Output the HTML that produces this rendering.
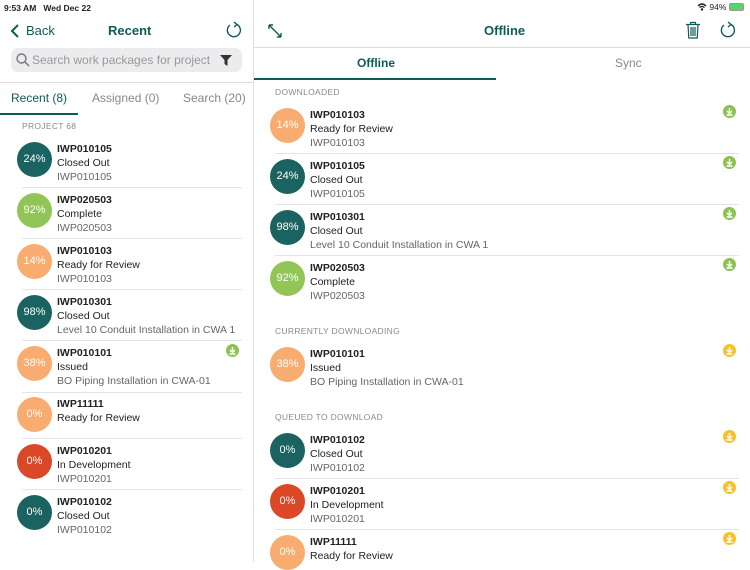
<!DOCTYPE html>
<html><head><meta charset="utf-8"><style>
*{margin:0;padding:0;box-sizing:border-box}
body{width:750px;height:562px;overflow:hidden;background:#fff;font-family:"Liberation Sans",sans-serif;position:relative;color:#222}
.a{position:absolute}
.c{position:absolute;width:35px;height:35px;border-radius:50%;color:#fff;font-size:11px;text-align:center;line-height:35px;opacity:.95}
.t{position:absolute;font-size:10.5px;line-height:14px;white-space:nowrap;margin-top:1px}
.t b{font-weight:bold;color:#222}
.t .g{color:#666}
.hr{position:absolute;height:1px;background:#e4e4e4}
.sec{position:absolute;font-size:8.5px;color:#8a8a8a;letter-spacing:.3px}
.dl{position:absolute;width:13px;height:13px;border-radius:50%}
.dl svg{position:absolute;left:0;top:0}
.teal{background:#0e5b58}.gr{background:#8cc34f}.or{background:#f8a868}.rd{background:#d93f1c}
</style></head><body>
<div class="a" style="left:4px;top:3px;font-size:8.5px;font-weight:bold;color:#222">9:53 AM&nbsp;&nbsp;&nbsp;Wed Dec 22</div>
<div class="a" style="left:697px;top:2px;font-size:8.5px;color:#222">
<svg width="10" height="8" viewBox="0 0 10 8" style="vertical-align:-1px"><path d="M1 3 Q5 -1 9 3 M2.5 4.5 Q5 2.3 7.5 4.5" stroke="#222" stroke-width="1.3" fill="none"/><circle cx="5" cy="6.5" r="1.2" fill="#222"/></svg> 94%
<span style="display:inline-block;width:15px;height:8px;background:#53d76a;border:1px solid #999;border-radius:2px;vertical-align:-1px"></span></div>

<div class="a" style="left:253px;top:0;width:1px;height:562px;background:#e0e0e0"></div>
<svg class="a" style="left:10px;top:24px" width="10" height="14"><path d="M8 1 L2 7 L8 13" stroke="#0e5b58" stroke-width="2" fill="none"/></svg>
<div class="a" style="left:26px;top:23px;font-size:13px;color:#0e5b58">Back</div>
<div class="a" style="left:108px;top:23px;font-size:13px;font-weight:bold;color:#0e5b58">Recent</div>
<svg class="a" style="left:225px;top:21px" width="18" height="18" viewBox="0 0 18 18"><path d="M12 3.5 A6.5 6.5 0 1 1 5 4" stroke="#0e5b58" stroke-width="1.4" fill="none"/><path d="M9 1 L12 3.5 L9 6" stroke="#0e5b58" stroke-width="1.4" fill="none"/></svg>
<div class="a" style="left:11px;top:48px;width:231px;height:24px;background:#ececee;border-radius:7px"></div>
<svg class="a" style="left:16px;top:53px" width="14" height="14"><circle cx="5.5" cy="5.5" r="4.5" stroke="#777" stroke-width="1.4" fill="none"/><path d="M9 9 L13 13" stroke="#777" stroke-width="1.5"/></svg>
<div class="a" style="left:32px;top:53px;font-size:12px;color:#999">Search work packages for project</div>
<svg class="a" style="left:220px;top:55px" width="12" height="11"><path d="M0 0 H12 L7.5 5 V11 L4.5 9 V5 Z" fill="#333"/></svg>
<div class="a" style="left:0;top:82px;width:253px;height:1px;background:#ddd"></div>
<div class="a" style="left:11px;top:91px;font-size:12px;color:#0e5b58">Recent (8)</div>
<div class="a" style="left:92px;top:91px;font-size:12px;color:#888">Assigned (0)</div>
<div class="a" style="left:183px;top:91px;font-size:12px;color:#888">Search (20)</div>
<div class="a" style="left:0;top:113px;width:78px;height:2px;background:#0e5b58"></div>
<div class="sec" style="left:22px;top:121px">PROJECT 68</div>

<div class="c teal" style="left:17px;top:142px">24%</div><div class="t" style="left:57px;top:141px"><b>IWP010105</b><br>Closed Out<br><span class="g">IWP010105</span></div><div class="hr" style="left:22px;top:187px;width:220px"></div>
<div class="c gr" style="left:17px;top:193px">92%</div><div class="t" style="left:57px;top:192px"><b>IWP020503</b><br>Complete<br><span class="g">IWP020503</span></div><div class="hr" style="left:22px;top:238px;width:220px"></div>
<div class="c or" style="left:17px;top:244px">14%</div><div class="t" style="left:57px;top:243px"><b>IWP010103</b><br>Ready for Review<br><span class="g">IWP010103</span></div><div class="hr" style="left:22px;top:289px;width:220px"></div>
<div class="c teal" style="left:17px;top:295px">98%</div><div class="t" style="left:57px;top:294px"><b>IWP010301</b><br>Closed Out<br><span class="g">Level 10 Conduit Installation in CWA 1</span></div><div class="hr" style="left:22px;top:340px;width:220px"></div>
<div class="c or" style="left:17px;top:346px">38%</div><div class="t" style="left:57px;top:345px"><b>IWP010101</b><br>Issued<br><span class="g">BO Piping Installation in CWA-01</span></div><div class="hr" style="left:22px;top:392px;width:220px"></div>
<div class="dl gr" style="left:226px;top:344px"><svg width="13" height="13"><path d="M6.5 3 V8 M4 6 L6.5 8.5 L9 6 M3.5 10 H9.5" stroke="#fff" stroke-width="1.5" fill="none"/></svg></div>
<div class="c or" style="left:17px;top:397px">0%</div><div class="t" style="left:57px;top:396px"><b>IWP11111</b><br>Ready for Review</div><div class="hr" style="left:22px;top:438px;width:220px"></div>
<div class="c rd" style="left:17px;top:444px">0%</div><div class="t" style="left:57px;top:443px"><b>IWP010201</b><br>In Development<br><span class="g">IWP010201</span></div><div class="hr" style="left:22px;top:489px;width:220px"></div>
<div class="c teal" style="left:17px;top:495px">0%</div><div class="t" style="left:57px;top:494px"><b>IWP010102</b><br>Closed Out<br><span class="g">IWP010102</span></div>

<svg class="a" style="left:267px;top:23px" width="16" height="16"><path d="M2 2 L14 14 M2 2 V6 M2 2 H6 M14 14 V10 M14 14 H10" stroke="#0e5b58" stroke-width="1.4" fill="none"/></svg>
<div class="a" style="left:484px;top:23px;font-size:13px;font-weight:bold;color:#0e5b58">Offline</div>
<svg class="a" style="left:685px;top:21px" width="16" height="18"><path d="M1 3.5 H15 M5.5 3.5 V1.5 H10.5 V3.5 M3 3.5 L3.8 17 H12.2 L13 3.5 M6 6 V15 M8 6 V15 M10 6 V15" stroke="#0e5b58" stroke-width="1.2" fill="none"/></svg>
<svg class="a" style="left:719px;top:21px" width="18" height="18" viewBox="0 0 18 18"><path d="M12 3.5 A6.5 6.5 0 1 1 5 4" stroke="#0e5b58" stroke-width="1.4" fill="none"/><path d="M9 1 L12 3.5 L9 6" stroke="#0e5b58" stroke-width="1.4" fill="none"/></svg>
<div class="a" style="left:254px;top:47px;width:496px;height:1px;background:#ddd"></div>
<div class="a" style="left:357px;top:56px;font-size:12px;font-weight:bold;color:#0e5b58">Offline</div>
<div class="a" style="left:615px;top:56px;font-size:12px;color:#888">Sync</div>
<div class="a" style="left:254px;top:78px;width:242px;height:2px;background:#0e5b58"></div>
<div class="sec" style="left:275px;top:87px">DOWNLOADED</div>

<div class="c or" style="left:270px;top:108px">14%</div><div class="t" style="left:310px;top:107px"><b>IWP010103</b><br>Ready for Review<br><span class="g">IWP010103</span></div><div class="hr" style="left:275px;top:153px;width:464px"></div>
<div class="c teal" style="left:270px;top:159px">24%</div><div class="t" style="left:310px;top:158px"><b>IWP010105</b><br>Closed Out<br><span class="g">IWP010105</span></div><div class="hr" style="left:275px;top:204px;width:464px"></div>
<div class="c teal" style="left:270px;top:210px">98%</div><div class="t" style="left:310px;top:209px"><b>IWP010301</b><br>Closed Out<br><span class="g">Level 10 Conduit Installation in CWA 1</span></div><div class="hr" style="left:275px;top:255px;width:464px"></div>
<div class="c gr" style="left:270px;top:261px">92%</div><div class="t" style="left:310px;top:260px"><b>IWP020503</b><br>Complete<br><span class="g">IWP020503</span></div>

<div class="sec" style="left:275px;top:326px">CURRENTLY DOWNLOADING</div>
<div class="c or" style="left:270px;top:347px">38%</div><div class="t" style="left:310px;top:346px"><b>IWP010101</b><br>Issued<br><span class="g">BO Piping Installation in CWA-01</span></div>

<div class="sec" style="left:275px;top:412px">QUEUED TO DOWNLOAD</div>
<div class="c teal" style="left:270px;top:433px">0%</div><div class="t" style="left:310px;top:432px"><b>IWP010102</b><br>Closed Out<br><span class="g">IWP010102</span></div><div class="hr" style="left:275px;top:478px;width:464px"></div>
<div class="c rd" style="left:270px;top:484px">0%</div><div class="t" style="left:310px;top:483px"><b>IWP010201</b><br>In Development<br><span class="g">IWP010201</span></div><div class="hr" style="left:275px;top:529px;width:464px"></div>
<div class="c or" style="left:270px;top:535px">0%</div><div class="t" style="left:310px;top:534px"><b>IWP11111</b><br>Ready for Review</div>

<div class="dl gr" style="left:723px;top:105px"><svg width="13" height="13"><path d="M6.5 3 V8 M4 6 L6.5 8.5 L9 6 M3.5 10 H9.5" stroke="#fff" stroke-width="1.5" fill="none"/></svg></div>
<div class="dl gr" style="left:723px;top:156px"><svg width="13" height="13"><path d="M6.5 3 V8 M4 6 L6.5 8.5 L9 6 M3.5 10 H9.5" stroke="#fff" stroke-width="1.5" fill="none"/></svg></div>
<div class="dl gr" style="left:723px;top:207px"><svg width="13" height="13"><path d="M6.5 3 V8 M4 6 L6.5 8.5 L9 6 M3.5 10 H9.5" stroke="#fff" stroke-width="1.5" fill="none"/></svg></div>
<div class="dl gr" style="left:723px;top:258px"><svg width="13" height="13"><path d="M6.5 3 V8 M4 6 L6.5 8.5 L9 6 M3.5 10 H9.5" stroke="#fff" stroke-width="1.5" fill="none"/></svg></div>
<div class="dl" style="left:723px;top:344px;background:#f6c12e"><svg width="13" height="13"><path d="M6.5 3 V8 M4 6 L6.5 8.5 L9 6 M3.5 10 H9.5" stroke="#fff" stroke-width="1.5" fill="none"/></svg></div>
<div class="dl" style="left:723px;top:430px;background:#f6c12e"><svg width="13" height="13"><path d="M6.5 3 V8 M4 6 L6.5 8.5 L9 6 M3.5 10 H9.5" stroke="#fff" stroke-width="1.5" fill="none"/></svg></div>
<div class="dl" style="left:723px;top:481px;background:#f6c12e"><svg width="13" height="13"><path d="M6.5 3 V8 M4 6 L6.5 8.5 L9 6 M3.5 10 H9.5" stroke="#fff" stroke-width="1.5" fill="none"/></svg></div>
<div class="dl" style="left:723px;top:532px;background:#f6c12e"><svg width="13" height="13"><path d="M6.5 3 V8 M4 6 L6.5 8.5 L9 6 M3.5 10 H9.5" stroke="#fff" stroke-width="1.5" fill="none"/></svg></div>
</body></html>
